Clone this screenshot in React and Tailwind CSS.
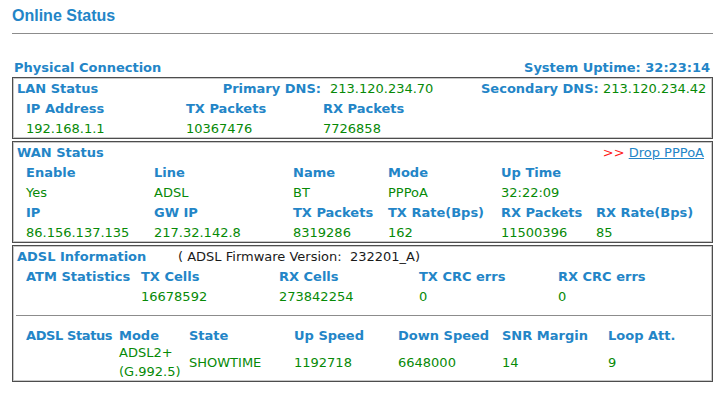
const BLUE = "text-[#2385c7]";
const GREEN = "text-[#078a07]";

function Cell({ w, head, children, className = "" }) {
  return (
    <div className={`${w} shrink-0 whitespace-nowrap ${head ? `font-bold ${BLUE}` : GREEN} ${className}`}>
      {children}
    </div>
  );
}

function Row({ children, className = "h-[20px]" }) {
  return <div className={`flex items-center pl-[13px] ${className}`}>{children}</div>;
}

function Box({ children, className = "" }) {
  return (
    <div className={`border border-[#4d4d4d] shadow-[inset_1px_1px_0_#c8c8c8,inset_-1px_-1px_0_#c8c8c8] ${className}`}>
      {children}
    </div>
  );
}

const wanCols = ["w-[128px]", "w-[139px]", "w-[95px]", "w-[113px]", "w-[95px]", "w-[100px]"];
const atmCols = ["w-[115px]", "w-[138px]", "w-[140px]", "w-[139px]", "w-[120px]"];
const adslCols = ["w-[93px]", "w-[70px]", "w-[105px]", "w-[104px]", "w-[104px]", "w-[106px]", "w-[80px]"];

export default function App() {
  return (
    <div className="w-[728px] h-[394px] bg-white pl-[12px] pr-[15px] text-[13px] font-['DejaVu_Sans',Verdana,sans-serif] leading-none">
      {/* page title */}
      <div className="h-[33px] pt-[6px]">
        <h1 className={`font-['Liberation_Sans',Arial,sans-serif] font-bold text-[16px] leading-[20px] ${BLUE}`}>Online Status</h1>
      </div>
      <div className="h-px bg-[#8c8c8c]" />

      <div className={`flex justify-between items-center h-[20px] mt-[23px] pl-[2px] pr-[3px] font-bold ${BLUE}`}>
        <span>Physical Connection</span>
        <span>System Uptime: 32:23:14</span>
      </div>

      {/* LAN */}
      <Box>
        <div className="flex items-center h-[20px] pl-[4px]">
          <Cell w="w-[190px]" head>LAN Status</Cell>
          <Cell w="w-[114px]" head className="text-right">Primary DNS:</Cell>
          <Cell w="w-[160px]" className="pl-[9px]">213.120.234.70</Cell>
          <Cell w="w-[122px]" head>Secondary DNS:</Cell>
          <Cell w="w-[110px]">213.120.234.42</Cell>
        </div>
        <Row>
          <Cell w="w-[160px]" head>IP Address</Cell>
          <Cell w="w-[137px]" head>TX Packets</Cell>
          <Cell w="w-[120px]" head>RX Packets</Cell>
        </Row>
        <Row>
          <Cell w="w-[160px]">192.168.1.1</Cell>
          <Cell w="w-[137px]">10367476</Cell>
          <Cell w="w-[120px]">7726858</Cell>
        </Row>
      </Box>

      {/* WAN */}
      <Box className="mt-[2px]">
        <div className="flex items-center justify-between h-[20px] pl-[4px] pr-[8px]">
          <Cell w="w-[150px]" head>WAN Status</Cell>
          <span className="whitespace-nowrap">
            <span className="text-[#ff1a1a]">&gt;&gt; </span>
            <a href="#" className={`underline ${BLUE}`}>Drop PPPoA</a>
          </span>
        </div>
        <Row>
          {["Enable", "Line", "Name", "Mode", "Up Time"].map((t, i) => (
            <Cell key={t} w={wanCols[i]} head>{t}</Cell>
          ))}
        </Row>
        <Row>
          {["Yes", "ADSL", "BT", "PPPoA", "32:22:09"].map((t, i) => (
            <Cell key={t} w={wanCols[i]}>{t}</Cell>
          ))}
        </Row>
        <Row>
          {["IP", "GW IP", "TX Packets", "TX Rate(Bps)", "RX Packets", "RX Rate(Bps)"].map((t, i) => (
            <Cell key={t} w={wanCols[i]} head>{t}</Cell>
          ))}
        </Row>
        <Row>
          {["86.156.137.135", "217.32.142.8", "8319286", "162", "11500396", "85"].map((t, i) => (
            <Cell key={t} w={wanCols[i]}>{t}</Cell>
          ))}
        </Row>
      </Box>

      {/* ADSL */}
      <Box className="mt-[2px]">
        <div className="flex items-center h-[20px] pl-[4px]">
          <Cell w="w-[161px]" head>ADSL Information</Cell>
          <span className="text-[#1a1a1a] whitespace-pre">( ADSL Firmware Version:  232201_A)</span>
        </div>
        <Row>
          {["ATM Statistics", "TX Cells", "RX Cells", "TX CRC errs", "RX CRC errs"].map((t, i) => (
            <Cell key={t} w={atmCols[i]} head>{t}</Cell>
          ))}
        </Row>
        <Row>
          {["", "16678592", "273842254", "0", "0"].map((t, i) => (
            <Cell key={i} w={atmCols[i]}>{t}</Cell>
          ))}
        </Row>
        <div className="h-px bg-[#8c8c8c] ml-[3px] mr-[1px] mt-[9px]" />
        <Row className="h-[16px] mt-[11px]">
          {["ADSL Status", "Mode", "State", "Up Speed", "Down Speed", "SNR Margin", "Loop Att."].map((t, i) => (
            <Cell key={t} w={adslCols[i]} head className={i === 0 ? "tracking-[-0.4px]" : ""}>{t}</Cell>
          ))}
        </Row>
        <Row className="h-[38px]">
          <Cell w={adslCols[0]} />
          <Cell w={adslCols[1]} className="leading-[19px]">
            ADSL2+
            <br />
            (G.992.5)
          </Cell>
          {["SHOWTIME", "1192718", "6648000", "14", "9"].map((t, i) => (
            <Cell key={t} w={adslCols[i + 2]}>{t}</Cell>
          ))}
        </Row>
      </Box>
    </div>
  );
}
